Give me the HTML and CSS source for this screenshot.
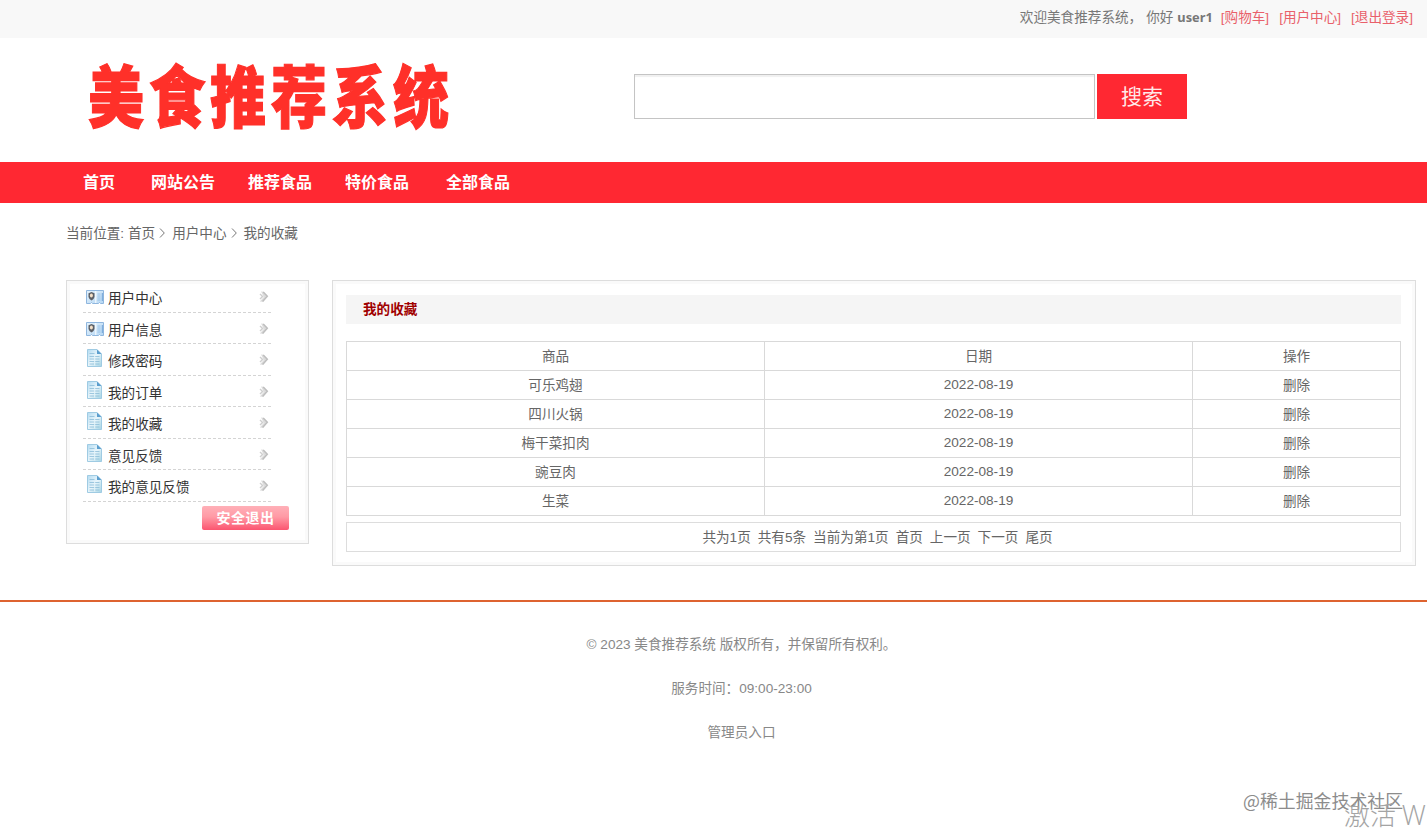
FILE: index.html
```html
<!DOCTYPE html>
<html lang="zh-CN">
<head>
<meta charset="utf-8">
<title>美食推荐系统</title>
<link rel="stylesheet" href="styles.css">
</head>
<body>
<svg class="defs" width="0" height="0">
  <defs>
    <linearGradient id="cardFill" x1="0" y1="0" x2="1" y2="1"><stop offset="0" stop-color="#e4f2fc"/><stop offset="1" stop-color="#b5d7f4"/></linearGradient>
    <linearGradient id="docFill" x1="0" y1="0" x2="1" y2="1"><stop offset="0" stop-color="#b4dcf2"/><stop offset=".5" stop-color="#e8f5fb"/><stop offset="1" stop-color="#a5d4e3"/></linearGradient>
    <symbol id="card" viewBox="0 0 18 14">
      <path d="M.5.5H17.5V13.5H14.5L13.5 12.5 12.5 13.5H6.5L5.5 12.5 4.5 13.5H.5Z" fill="url(#cardFill)" stroke="#8fb6de"/>
      <path d="M9.8 1v12" stroke="#fff"/>
      <path d="M2.5 3.2 5.5 2 8.5 3.2V7Q8 9 5.5 10.5 3 9 2.5 7Z" fill="#5c6067"/>
      <ellipse cx="5.4" cy="5.4" rx="1.5" ry="2" fill="#f4e0c8"/>
      <path d="M11.5 4h3M11.5 6h3M11.5 8h3M11.5 10h3" stroke="#8fbae2" stroke-width=".8"/>
      <path d="M16.3 3v8" stroke="#6ea2d6"/>
    </symbol>
    <symbol id="doc" viewBox="0 0 15 18">
      <path d="M.5.5H10L14.5 5V17.5H.5Z" fill="url(#docFill)" stroke="#9fcbe3"/>
      <path d="M10 .5V5h4.5Z" fill="#5b9ece"/>
      <path d="M2.5 4.5h5M2.5 7.5h10M2.5 10h10M2.5 12.5h10M2.5 15h10" stroke="#8bbdd8" stroke-width=".8"/>
      <path d="M7.7 6v10.5" stroke="#e7f6fb"/>
    </symbol>
    <symbol id="arrow" viewBox="0 0 10 12">
      <path d="M2 .5 4.5.8 8.8 5 4 10.8.8 10.5 4.8 6Z" fill="#dcdcdc"/>
      <path d="M4.2 1 8.3 5.2 3.6 10.5" fill="none" stroke="#bebebe" stroke-width="1.5"/>
      <path d="M1 3 3.6 5.4 1 8" fill="none" stroke="#cfcfcf" stroke-width="1.4"/>
    </symbol>
  </defs>
</svg>
<div class="topbar">
  <span class="welcome">欢迎美食推荐系统，</span><span class="hello">你好</span><b class="user">user1</b>
  <nav class="account"><a>[购物车]</a><a>[用户中心]</a><a>[退出登录]</a></nav>
</div>
<header class="header">
  <div class="logo">美食推荐系统</div>
  <form class="search"><input class="search-box" type="text"><button class="search-btn" type="button">搜索</button></form>
</header>
<nav class="nav"><a>首页</a><a>网站公告</a><a>推荐食品</a><a>特价食品</a><a class="last">全部食品</a></nav>
<div class="crumbs">
  <span>当前位置: 首页</span>
  <svg width="6" height="10" viewBox="0 0 6 10"><path d="M1 .5 5.3 5 1 9.5"/></svg>
  <span class="mid">用户中心</span>
  <svg width="6" height="10" viewBox="0 0 6 10"><path d="M1 .5 5.3 5 1 9.5"/></svg>
  <span class="end">我的收藏</span>
</div>
<main class="main">
  <aside class="panel side">
    <ul class="menu">
      <li><svg class="card"><use href="#card"/></svg><span>用户中心</span><svg class="arrow"><use href="#arrow"/></svg></li>
      <li><svg class="card"><use href="#card"/></svg><span>用户信息</span><svg class="arrow"><use href="#arrow"/></svg></li>
      <li><svg class="doc"><use href="#doc"/></svg><span>修改密码</span><svg class="arrow"><use href="#arrow"/></svg></li>
      <li><svg class="doc"><use href="#doc"/></svg><span>我的订单</span><svg class="arrow"><use href="#arrow"/></svg></li>
      <li><svg class="doc"><use href="#doc"/></svg><span>我的收藏</span><svg class="arrow"><use href="#arrow"/></svg></li>
      <li><svg class="doc"><use href="#doc"/></svg><span>意见反馈</span><svg class="arrow"><use href="#arrow"/></svg></li>
      <li><svg class="doc"><use href="#doc"/></svg><span>我的意见反馈</span><svg class="arrow"><use href="#arrow"/></svg></li>
    </ul>
    <button class="logout" type="button">安全退出</button>
  </aside>
  <section class="panel content">
    <h2 class="title">我的收藏</h2>
    <table class="grid">
      <colgroup><col class="c1"><col class="c2"><col class="c3"></colgroup>
      <tr><td>商品</td><td class="head">日期</td><td>操作</td></tr>
      <tr><td>可乐鸡翅</td><td>2022-08-19</td><td>删除</td></tr>
      <tr><td>四川火锅</td><td>2022-08-19</td><td>删除</td></tr>
      <tr><td>梅干菜扣肉</td><td>2022-08-19</td><td>删除</td></tr>
      <tr><td>豌豆肉</td><td>2022-08-19</td><td>删除</td></tr>
      <tr><td>生菜</td><td>2022-08-19</td><td>删除</td></tr>
    </table>
    <div class="pager"><span>共为1页</span><span>共有5条</span><span>当前为第1页</span><a>首页</a><a>上一页</a><a>下一页</a><a>尾页</a></div>
  </section>
</main>
<footer class="footer">
  <p>© 2023 美食推荐系统 版权所有，并保留所有权利。</p>
  <p>服务时间：09:00-23:00</p>
  <p>管理员入口</p>
</footer>
<div class="mark">@稀土掘金技术社区</div>
<div class="activate">激活 <span>W</span></div>
</body>
</html>
```
FILE: styles.css
```css
* { box-sizing: border-box; }
html, body { height: 100%; overflow: hidden; }
body {
  margin: 0;
  position: relative;
  background: #fff;
  color: #666;
  font: 13.6px/20px "Liberation Sans", "Noto Sans CJK SC", sans-serif;
}
.defs { position: absolute; }
.topbar {
  height: 38px;
  padding: 0 14px 3px 0;
  display: flex;
  align-items: center;
  justify-content: flex-end;
  background: #f8f8f8;
  color: #777;
  white-space: nowrap;
}
.hello { margin: 0 4px; }
.user { margin-top: -2px; font-family: "Noto Sans", sans-serif; font-size: 12.8px; }
.account { display: flex; gap: 10px; margin-left: 8px; color: #e9606a; }
.header { height: 124px; display: flex; align-items: flex-start; }
.logo {
  width: 546px;
  margin: 17px 0 0 88px;
  font-family: "Noto Sans CJK SC", sans-serif;
  font-size: 56px;
  font-weight: 900;
  line-height: 76px;
  letter-spacing: 5px;
  color: #ff3029;
  -webkit-text-stroke: 1px #ff3029;
  transform: scaleY(1.2);
  white-space: nowrap;
}
.search { display: flex; gap: 2px; margin: 36px 0 0; }
.search-box {
  width: 461px;
  height: 45px;
  border: 1px solid #c4c4c4;
  box-shadow: inset 0 2px 1px #f0f0f0;
  outline: 0;
}
.search-btn {
  width: 90px;
  height: 45px;
  padding: 0 0 4px;
  border: 0;
  background: #ff2832;
  color: #ffe9e9;
  font: 21px "Noto Sans CJK SC", sans-serif;
}
.nav {
  height: 41px;
  padding-left: 83px;
  display: flex;
  align-items: center;
  gap: 33px;
  background: #ff2832;
  color: #fff;
  font-size: 16px;
  font-weight: bold;
}
.nav a:first-child { margin-right: 3px; }
.nav .last { margin-left: 4px; }
.crumbs { height: 77px; padding: 21px 0 0 66px; display: flex; align-items: flex-start; }
.crumbs svg { margin: 4px 0 0 4px; fill: none; stroke: #777; }
.crumbs .mid { margin-left: 7px; }
.crumbs .end { margin-left: 7px; }
.main { display: flex; align-items: flex-start; gap: 23px; padding-left: 66px; }
.panel { border: 1px solid #ddd; box-shadow: inset 0 0 0 3px #fafafa; }
.side { width: 243px; height: 264px; padding: 0 19px 0 16px; display: flex; flex-direction: column; }
.menu { list-style: none; width: 188px; margin: 0; padding: 0; color: #333; }
.menu li { height: 31.5px; display: flex; align-items: flex-start; border-bottom: 1px dashed #d4d4d4; }
.menu span { flex: 1; margin-top: 8px; }
.card { width: 18px; height: 14px; margin: 9px 4px 0 3px; }
.doc { width: 15px; height: 18px; margin: 5px 5px 0 4px; }
.doc + span { margin-left: 1px; }
.arrow { width: 10px; height: 12px; margin: 10px 2px 0 0; }
.logout {
  align-self: flex-end;
  width: 87px;
  height: 24px;
  margin-top: 4px;
  padding: 0 0 2px;
  border: 0;
  border-radius: 2px;
  background: linear-gradient(#ffb0b8, #ff9aa5 45%, #fb5570);
  color: #fff;
  font: bold 14px/22px "Noto Sans CJK SC", sans-serif;
  letter-spacing: .5px;
}
.content { width: 1084px; height: 286px; padding: 14px 14px 0 13px; }
.title {
  height: 29px;
  margin: 0 0 17px;
  padding-left: 17px;
  background: #f5f5f5;
  color: #a00000;
  font-size: 13.6px;
  line-height: 29px;
}
.grid { width: 1055px; table-layout: fixed; border-collapse: collapse; text-align: center; }
.c1 { width: 418px; }
.c2 { width: 428px; }
.grid td { height: 29px; padding: 0; border: 1px solid #d9d9d9; }
.grid td:nth-child(odd), .grid .head { padding-top: 1px; }
.pager {
  height: 30px;
  margin-top: 6px;
  padding: 1px 0 0 8px;
  display: flex;
  align-items: center;
  justify-content: center;
  gap: 7px;
  border: 1px solid #ddd;
}
.footer {
  width: 1483px;
  margin-top: 34px;
  padding-top: 33px;
  border-top: 2px solid #de6330;
  color: #888;
  text-align: center;
}
.footer p { margin: 0 0 24px; }
.mark {
  position: absolute;
  left: 1243px;
  top: 788px;
  font: 17.9px/24px "Noto Sans CJK SC", sans-serif;
  color: #8c8c8c;
  white-space: nowrap;
}
.activate {
  position: absolute;
  left: 1344px;
  top: 798px;
  font: 300 26px/32px "Noto Sans CJK SC", sans-serif;
  color: #a4a4a4;
  white-space: nowrap;
}
.activate span { font: 300 27px/32px "Open Sans", sans-serif; }
```
